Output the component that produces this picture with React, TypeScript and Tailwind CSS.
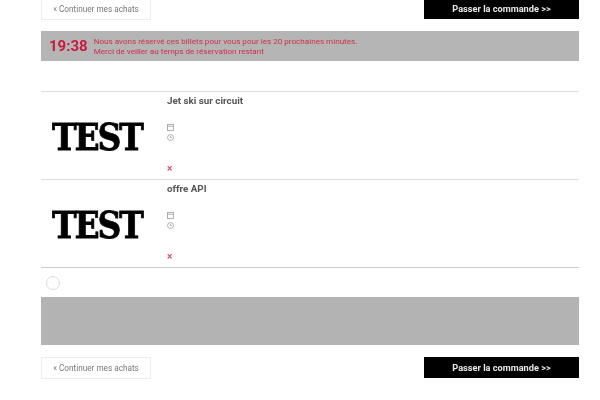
function ContinueButton({ className }: { className: string }) {
  return (
    <a className={`flex w-[110px] items-center justify-center border-[#eeeeee] text-[8.2px] text-[#777777] ${className}`}>
      « Continuer mes achats
    </a>
  );
}

function OrderButton({ className }: { className: string }) {
  return (
    <a className={`flex w-[155px] items-center justify-center bg-black text-[9.2px] font-bold text-[#e8e8e8] ${className}`}>
      Passer la commande &gt;&gt;
    </a>
  );
}

function CalendarIcon() {
  return (
    <svg width="7" height="7" viewBox="0 0 7 7" fill="none" stroke="#a8a8a8" strokeWidth="0.9">
      <rect x="0.5" y="0.5" width="6" height="6" />
      <path d="M0.5 2.3h6" />
    </svg>
  );
}

function ClockIcon() {
  return (
    <svg width="7" height="7" viewBox="0 0 7 7" fill="none" stroke="#a0a0a0" strokeWidth="0.8">
      <circle cx="3.5" cy="3.5" r="3" />
      <path d="M3.5 1.8V3.5h1.4" />
    </svg>
  );
}

function TicketRow({ title }: { title: string }) {
  return (
    <div className="flex h-[88px] border-t border-[#dddddd]">
      <div className="flex w-[126px] items-center">
        <span className="mt-[2px] ml-[11px] origin-left scale-x-[0.87] font-['DejaVu_Serif',serif] text-[38px] leading-none font-black tracking-[-2.5px] text-black [-webkit-text-stroke:0.8px_black]">
          TEST
        </span>
      </div>
      <div className="flex flex-col items-start">
        <h3 className="mt-[3px] text-[9.8px] leading-[12px] font-bold text-[#555555]">{title}</h3>
        <div className="mt-[17px] flex flex-col gap-[3px]">
          <CalendarIcon />
          <ClockIcon />
        </div>
        <span className="mt-[23px] text-[10px] leading-[10px] font-bold text-[#e0506c]">×</span>
      </div>
    </div>
  );
}

export default function App() {
  return (
    <div className="h-[400px] w-[600px] overflow-hidden bg-white font-['Roboto',sans-serif] blur-[0.5px]">
      <div className="mx-[41px] w-[538px]">
        <div className="flex h-[20px] justify-between">
          <ContinueButton className="border-x border-b" />
          <OrderButton className="h-[19px] pb-[1px]" />
        </div>

        <div className="mt-[11px] flex h-[30px] items-center bg-[#b5b5b5] pl-[8px]">
          <span className="text-[15px] font-bold text-[#c8193f]">19:38</span>
          <p className="ml-[6px] text-[8.1px] leading-[10px] text-[#cc2f4f]">
            Nous avons réservé ces billets pour vous pour les 20 prochaines minutes.
            <br />
            Merci de veiller au temps de réservation restant
          </p>
        </div>

        <div className="mt-[30px]">
          <TicketRow title="Jet ski sur circuit" />
          <TicketRow title="offre API" />
        </div>

        <div className="flex h-[30px] items-center border-t border-[#cccccc] pl-[5px]">
          <span className="mt-[1px] h-[14px] w-[14px] rounded-full border border-[#dddddd]" />
        </div>

        <div className="h-[48px] bg-[#b3b3b3]" />

        <div className="mt-[12px] flex justify-between">
          <ContinueButton className="h-[22px] border" />
          <OrderButton className="h-[21px]" />
        </div>
      </div>
    </div>
  );
}
